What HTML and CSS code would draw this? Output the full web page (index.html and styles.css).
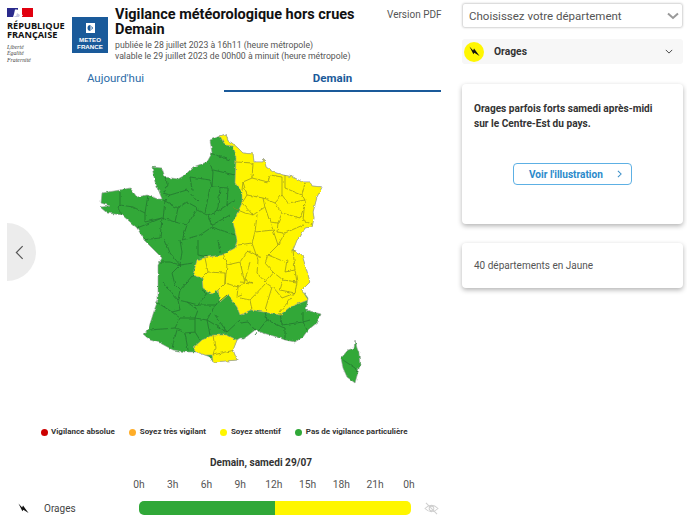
FILE: index.html
```html
<!DOCTYPE html>
<html lang="fr">
<head>
<meta charset="utf-8">
<title>Vigilance météorologique</title>
<link rel="stylesheet" href="styles.css">
</head>
<body>
<div class="page">
  <main class="left">
    <header class="head">
      <div class="rf">
        <svg class="flag" viewBox="0 0 26 9" width="26" height="9"><rect width="26" height="9" fill="#fff"/><rect width="11" height="9" fill="#2a2a8c"/><rect x="15" width="11" height="9" fill="#e1000f"/><path d="M8 1.500 Q12 1 13 3 L16 8 L6 9 L7 6Z" fill="#fff"/><path d="M9 9 L10 5 L13 7 L12 9Z" fill="#c8c8e0"/></svg>
        <div class="rf-name">RÉPUBLIQUE<br>FRANÇAISE</div>
        <div class="rf-motto">Liberté<br>Égalité<br>Fraternité</div>
      </div>
      <div class="mf">
        <svg class="mf-icon" viewBox="0 0 9 10" width="9" height="10"><rect width="9" height="10" fill="#fff"/><path d="M4.500 2 A3 3 0 1 0 4.500 8Z" fill="#1a5a9a"/><path d="M5.600 3.500 A2 2 0 0 1 5.600 6.500" fill="none" stroke="#1a5a9a"/></svg>
        <div class="mf-text">METEO<br>FRANCE</div>
      </div>
      <div class="titles">
        <h1>Vigilance météorologique hors crues<br>Demain</h1>
        <p>publiée le 28 juillet 2023 à 16h11 (heure métropole)</p>
        <p>valable le 29 juillet 2023 de 00h00 à minuit (heure métropole)</p>
      </div>
      <a class="pdf">Version PDF</a>
    </header>
    <nav class="tabs">
      <div class="tab">Aujourd'hui</div>
      <div class="tab active">Demain</div>
    </nav>
    <section class="stage">
      <button class="prev"><svg viewBox="0 0 10 16" width="9" height="15"><path d="M8.500 1 L1.500 8 L8.500 15" fill="none" stroke="#555" stroke-width="1.300"/></svg></button>
      <svg class="map" viewBox="90 125 280 265" width="280" height="265">
        <defs>
          <filter id="wiggle" x="80" y="120" width="300" height="275" filterUnits="userSpaceOnUse">
            <feTurbulence type="fractalNoise" baseFrequency="0.22" numOctaves="2" seed="4"/>
            <feDisplacementMap in="SourceGraphic" scale="3" xChannelSelector="R" yChannelSelector="G"/>
          </filter>
        </defs>
        <g class="wiggly">
        <g stroke="#a0a0a0" stroke-width="0.600" stroke-linejoin="round">
          <path class="g" d="M220 136 226 134 228 141 232 143 238 148 243 153 253 154 254 162 263 162 264 158 266 167 273 172 283 175 293 177 302 182 310 182 312 186 322 187 317 197 313 212 314 218 312 227 305 228 300 237 297 240 293 250 302 255 306 268 310 282 302 290 308 298 306 310 321 314 318 322 308 330 303 337 295 342 285 340 277 337 263 333 255 330 245 338 240 338 237 340 233 350 237 360 213 362 210 357 197 352 185 352 173 350 160 343 150 340 143 334 148 330 155 308 158 300 158 277 158 265 162 258 145 241 137 228 122 215 107 213 100 207 110 206 101 203 102 193 120 190 130 188 137 197 147 195 158 199 162 199 155 182 152 167 162 168 165 177 178 179 185 175 193 167 207 162 212 153 210 140Z"/>
          <path class="y" d="M220 136 226 134 228 141 232 143 238 148 243 153 253 154 254 162 263 162 264 158 266 167 273 172 283 175 293 177 302 182 310 182 312 186 322 187 317 197 313 212 314 218 312 227 305 228 300 237 297 240 293 250 302 255 306 268 310 282 302 290 308 300 290 307 280 315 252 310 240 315 237 307 228 295 220 302 218 290 212 294 203 288 202 278 193 275 197 260 207 257 222 255 235 248 237 240 233 222 242 203 242 192 235 183 236 158 232 146 225 145Z"/>
          <path class="y" d="M193 348 202 340 213 335 227 335 237 340 233 350 237 360 213 362 212 355 205 355 197 352Z"/>
          <path class="g" d="M355 340 357 348 359 353 360 365 355 383 347 377 343 368 341 358 348 350 354 348Z"/>
        </g>
        <g class="lines-g">
          <path d="M120 190 120 205 118 207 122 215M120 205 133 207 145 213M148 195 145 213 145 222M145 222 162 218M165 177 168 185 163 193 170 195 187 190 198 202M170 195 165 200 163 220M163 200 178 208 187 202 198 208M178 208 175 222M137 228 162 218 175 222 187 225M162 218 160 238 143 240M190 177 210 180 212 187M190 177 192 190M210 163 213 172 212 187M210 153 230 160M213 170 235 175M212 187 228 188 227 205M220 188 218 207 215 215M197 210 207 215 215 213 227 205 235 200M210 187 205 213M187 225 198 208M208 215 212 227 200 235M187 225 182 240 200 235M230 215 212 225M212 227 235 235"/>
          <path d="M165 240 170 253 180 265M180 240 182 252 180 265 193 263M198 240 198 255 208 257M218 240 220 253M158 262 170 262 180 265 172 273 175 285 180 290 193 275M180 290 178 300 187 302 198 305 207 293 202 290M163 282 178 300M158 303 172 312 180 310 178 300M150 330 175 328 180 318 172 312M180 318 195 318 198 310 187 302M195 318 207 320 215 305 198 305M215 305 227 295M175 328 185 333 195 332 195 318M177 330 172 348M185 333 188 350M195 332 200 340M207 320 227 332 215 315M227 332 240 320M207 320 210 335"/>
          <path d="M240 323 248 322 255 330M265 312 267 320 255 335M267 320 282 327 285 328 285 340M280 313 282 325 303 322 310 320M303 322 307 330M303 312 303 322M343 360 355 368 358 372"/>
        </g>
        <g class="lines-y">
          <path d="M236 162 253 163 252 178 243 182 242 190M252 178 268 182 270 175 282 177 282 195 275 203 263 198 247 195 243 182M247 195 242 203 253 215 265 207 263 198M265 207 270 222 278 223 282 213 275 203M282 195 288 203 305 200 302 195 285 188 285 175M302 195 305 183M305 200 303 220 313 225M282 213 300 218 305 205M278 223 277 232 285 233 303 225M233 208 245 213 253 215M257 215 255 232 273 230 270 222M255 232 252 243M273 230 278 245M285 233 278 245"/>
          <path d="M205 258 208 272 202 278M208 272 225 273 225 283 218 290M223 253 227 265 225 283M227 265 240 262 248 250M225 283 238 287 237 297 242 295M240 262 245 283 238 287M247 250 262 258M250 262 245 280 252 283 240 282M258 260 257 273 265 282 273 272 265 263 268 255 285 262M287 260 285 272 295 270 293 250M273 272 283 280 280 290 295 293 297 282 295 270M283 280 297 282M266 283 250 300 252 310M266 283 272 287 265 310M273 287 282 298 295 293 280 312M240 298 250 300M213 335 215 348 213 355 235 350M238 245 252 243 258 260M278 245 268 255"/>
        </g>
        </g>
      </svg>
    </section>
    <ul class="legend">
      <li><i class="dot red"></i>Vigilance absolue</li>
      <li><i class="dot orange"></i>Soyez très vigilant</li>
      <li><i class="dot yellow"></i>Soyez attentif</li>
      <li><i class="dot green"></i>Pas de vigilance particulière</li>
    </ul>
    <h2 class="date">Demain, samedi 29/07</h2>
    <div class="hours">
      <span>0h</span><span>3h</span><span>6h</span><span>9h</span><span>12h</span><span>15h</span><span>18h</span><span>21h</span><span>0h</span>
    </div>
    <div class="timeline">
      <svg class="bolt" viewBox="0 0 12 12" width="11" height="11"><path d="M0.500 0.500 4.500 5 5.500 2.800 11.500 11 5.800 7.400 4.800 9Z" fill="#111"/></svg>
      <span class="tl-label">Orages</span>
      <div class="bar"><div class="bar-g"></div><div class="bar-y"></div></div>
      <svg class="eye" viewBox="0 0 16 14" width="15" height="13"><path d="M1 7 Q8 0 15 7 Q8 14 1 7Z M5.500 7 A2.500 2.500 0 0 0 10.500 7 A2.500 2.500 0 0 0 5.500 7 M2 1 14 13" fill="none" stroke="#cfcfcf" stroke-width="1.100"/></svg>
    </div>
  </main>
  <aside class="right">
    <div class="select">
      <span>Choisissez votre département</span>
      <svg viewBox="0 0 12 8" width="12" height="8"><path d="M1 1.500 6 6 11 1.500" fill="none" stroke="#999" stroke-width="2"/></svg>
    </div>
    <div class="phenom">
      <span class="circle"><svg viewBox="0 0 12 12" width="11" height="11"><path d="M0.500 0.500 4.500 5 5.500 2.800 11.500 11 5.800 7.400 4.800 9Z" fill="#111"/></svg></span>
      <strong>Orages</strong>
      <svg class="phenom-chev" viewBox="0 0 10 6" width="8" height="5"><path d="M1 1 5 5 9 1" fill="none" stroke="#444" stroke-width="1.200"/></svg>
    </div>
    <div class="card main-card">
      <p>Orages parfois forts samedi après-midi<br>sur le Centre-Est du pays.</p>
      <a class="btn">Voir l'illustration<svg viewBox="0 0 6 10" width="5" height="8"><path d="M1 1 5 5 1 9" fill="none" stroke="#3b8fc8" stroke-width="1.300"/></svg></a>
    </div>
    <div class="card small-card">40 départements en Jaune</div>
  </aside>
</div>
</body>
</html>
```
FILE: styles.css
```css
* { box-sizing: border-box; }
html, body { margin: 0; padding: 0; background: #fff; }
body { font-family: Roboto, "Liberation Sans", sans-serif; color: #333; overflow: hidden; }
.page { display: flex; width: 687px; height: 520px; }
.left { width: 441px; flex: none; display: flex; flex-direction: column; }
.right { width: 221px; flex: none; margin-left: 21px; padding-top: 3px; display: flex; flex-direction: column; }

.head { display: flex; height: 66px; padding-top: 8px; }
.rf { width: 65px; margin-left: 7px; flex: none; }
.flag { display: block; }
.rf-name { font-family: "Open Sans", sans-serif; font-weight: 700; font-size: 9.200px; line-height: 9.500px; color: #111; margin-top: 3.500px; white-space: nowrap; }
.rf-motto { font-family: "Liberation Serif", serif; font-style: italic; font-size: 5.800px; line-height: 6.500px; color: #444; margin-top: 4px; }
.mf { width: 36px; height: 36px; margin: 9px 0 0; background: #1a5a9a; flex: none; display: flex; flex-direction: column; align-items: center; padding-top: 6px; }
.mf-icon { display: block; }
.mf-text { font-family: "Liberation Sans", sans-serif; font-weight: 700; font-size: 6.200px; line-height: 7px; color: #fff; text-align: center; margin-top: 3px; }
.titles { margin-left: 7px; width: 272px; flex: none; margin-top: -1px; }
h1 { margin: 0 0 3px; font-size: 14.500px; line-height: 15px; font-weight: 700; color: #111; white-space: nowrap; }
.titles p { margin: 0; font-size: 8.700px; line-height: 11px; color: #555; white-space: nowrap; }
.pdf { font-size: 10px; line-height: 13px; color: #555; white-space: nowrap; }

.tabs { display: flex; height: 26px; padding-left: 7px; }
.tab { width: 217px; text-align: center; font-size: 11.500px; line-height: 24px; color: #2d6ca8; }
.tab.active { font-weight: 700; color: #1a5a9a; border-bottom: 2px solid #1a5a9a; }

.stage { position: relative; height: 298px; padding: 33px 0 0 90px; }
.prev { position: absolute; left: 7px; top: 131px; width: 29px; height: 58px; padding: 0 4px 0 0; border: 0; border-radius: 0 29px 29px 0; background: #ececec; display: flex; align-items: center; justify-content: center; }
.map { display: block; }
.wiggly { filter: url(#wiggle); }
.g { fill: #30a838; }
.y { fill: #fff600; }
.lines-g path { fill: none; stroke: #26752e; stroke-width: 0.800; stroke-linejoin: round; }
.lines-y path { fill: none; stroke: #8f8f20; stroke-width: 0.700; stroke-linejoin: round; }

.legend { list-style: none; margin: 36px 0 0; padding: 0 0 0 40.500px; display: flex; height: 12px; font-size: 8px; line-height: 12px; font-weight: 700; color: #333; white-space: nowrap; }
.legend li { display: flex; align-items: center; margin-right: 14.500px; }
.dot { width: 7px; height: 7px; border-radius: 50%; margin-right: 3.500px; flex: none; }
.red { background: #cc0000; }
.orange { background: #ffad28; }
.yellow { background: #fff600; }
.green { background: #30a838; }

.date { margin: 18px 0 0; padding-left: 81px; text-align: center; font-size: 10.100px; line-height: 13px; font-weight: 700; color: #333; }
.hours { display: flex; margin: 9px 0 0 122px; font-size: 10.300px; line-height: 13px; color: #555; }
.hours span { width: 33.750px; text-align: center; flex: none; }
.timeline { display: flex; align-items: center; height: 14px; margin-top: 10px; padding-left: 18px; }
.bolt { flex: none; }
.tl-label { width: 95px; margin-left: 15px; font-size: 10px; color: #444; flex: none; }
.bar { display: flex; width: 272px; height: 14px; border-radius: 5px; overflow: hidden; flex: none; }
.bar-g { width: 136px; background: #30a838; }
.bar-y { flex: 1; background: #fff600; }
.eye { margin-left: 13px; flex: none; }

.select { height: 25px; border: 1px solid #ddd; border-radius: 3px; box-shadow: 0 0 2px rgba(0,0,0,.18); display: flex; align-items: center; justify-content: space-between; padding: 0 3px 0 6px; font-size: 11.500px; color: #555; }
.phenom { height: 25px; margin-top: 11px; background: #f7f7f7; border-radius: 3px; display: flex; align-items: center; padding-left: 2px; font-size: 10.300px; }
.circle { width: 20px; height: 20px; border-radius: 50%; background: #fff600; display: flex; align-items: center; justify-content: center; flex: none; }
.phenom strong { margin-left: 10px; color: #333; flex: 1; }
.phenom-chev { margin-right: 10px; }
.card { background: #fff; border-radius: 4px; box-shadow: 0 2px 5px rgba(0,0,0,.3); }
.main-card { height: 140px; margin-top: 20px; padding: 17px 12px 0; }
.main-card p { margin: 0; font-size: 10.100px; line-height: 15px; font-weight: 700; color: #333; white-space: nowrap; }
.btn { display: flex; align-items: center; justify-content: space-between; width: 119px; height: 22px; margin: 32px 0 0 39px; padding: 0 9px 0 15px; border: 1px solid #5db0e4; border-radius: 4px; font-size: 10.100px; font-weight: 700; color: #2b8acb; }
.small-card { height: 45px; margin-top: 19px; padding: 0 12px; display: flex; align-items: center; font-size: 10px; color: #555; }
```
